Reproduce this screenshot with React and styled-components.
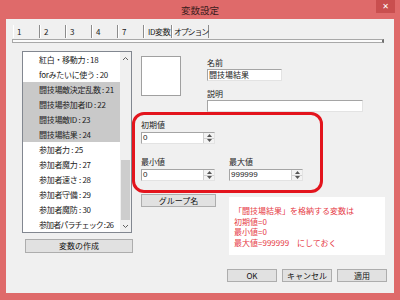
import React from "react";
import styled, { createGlobalStyle } from "styled-components";

const font = `"Noto Sans CJK JP", "Noto Sans", "Liberation Sans", sans-serif`;

const GlobalStyle = createGlobalStyle`
  html, body {
    margin: 0;
    padding: 0;
  }
  body {
    width: 400px;
    height: 300px;
    overflow: hidden;
    font-family: ${font};
    font-size: 8px;
    color: #1a1a1a;
  }
`;

const Frame = styled.div`
  width: 400px;
  height: 300px;
  box-sizing: border-box;
  padding: 0 6px 7px 6px;
  background: #df6a6a;
  display: flex;
  flex-direction: column;
`;

const TitleBar = styled.div`
  height: 19px;
  display: grid;
  grid-template-columns: 1fr auto 1fr;
  align-items: start;
`;

const Title = styled.div`
  grid-column: 2;
  font-size: 9.5px;
  line-height: 20px;
  color: #3b1c1c;
`;

const CloseButton = styled.div`
  grid-column: 3;
  justify-self: end;
  margin-right: -1px;
  width: 19px;
  height: 13px;
  background: #c94f4f;
  color: #fff;
  font: bold 8px/13px "DejaVu Sans", sans-serif;
  text-align: center;
`;

const Client = styled.div`
  flex: 1;
  background: #f0f0f0;
  display: flex;
  flex-direction: column;
`;

const TabStrip = styled.div`
  margin: 6px 10px 0 6px;
`;

const TabRow = styled.div`
  display: flex;
  height: 13px;
  padding-left: 1px;
`;

const Tab = styled.div`
  width: ${(p) => p.w}px;
  box-sizing: border-box;
  padding-left: ${(p) => (p.tight ? 1 : 3)}px;
  line-height: 13px;
  border-left: 1px solid #ffffff;
  border-right: 1px solid #8c8c8c;
  white-space: nowrap;
  letter-spacing: ${(p) => (p.tight ? -1.2 : -0.4)}px;
`;

const TabPanelEdge = styled.div`
  height: 4px;
  margin-top: 1px;
  box-sizing: border-box;
  border: 1px solid #a8a8a8;
  border-right: 2px solid #707070;
  background: #fbfbfb;
`;

const Body = styled.div`
  display: flex;
`;

const LeftCol = styled.div`
  width: 110px;
  margin-left: 16px;
  padding-top: 8px;
  display: flex;
  flex-direction: column;
`;

const ListBox = styled.div`
  height: 182px;
  box-sizing: border-box;
  border: 1px solid #828790;
  background: #fff;
  display: flex;
`;

const ListItems = styled.div`
  flex: 1;
  overflow: hidden;
`;

const ListRow = styled.div`
  height: 15px;
  line-height: 15px;
  padding-left: 16px;
  white-space: nowrap;
  color: #222;
  letter-spacing: ${(p) => (p.tight ? -0.9 : -0.3)}px;
  background: ${(p) => (p.selected ? "#c9c9c9" : "transparent")};
`;

const ScrollBar = styled.div`
  width: 11px;
  background: #f0f0f0;
  display: flex;
  flex-direction: column;
`;

const ScrollArrow = styled.div`
  height: 12px;
  display: flex;
  align-items: center;
  justify-content: center;
`;

const ScrollTrack = styled.div`
  flex: 1;
  display: flex;
  flex-direction: column;
  justify-content: flex-end;
`;

const ScrollThumb = styled.div`
  height: 60px;
  margin: 0 1px;
  background: #cdcdcd;
`;

const Button = styled.div`
  width: ${(p) => p.w}px;
  height: ${(p) => p.h || 13}px;
  box-sizing: border-box;
  border: 1px solid #adadad;
  background: #e1e1e1;
  text-align: center;
  line-height: ${(p) => (p.h || 13) - 2}px;
  color: #111;
  white-space: nowrap;
`;

const CreateButton = styled(Button)`
  margin-top: 6px;
  margin-left: 3px;
`;

const RightCol = styled.div`
  padding-top: 13px;
  display: flex;
  flex-direction: column;
`;

const TopRow = styled.div`
  display: flex;
  padding-left: 9px;
`;

const ImageBox = styled.div`
  width: 40px;
  height: 40px;
  box-sizing: border-box;
  border: 1px solid #a0a0a0;
  background: #fff;
`;

const Fields = styled.div`
  margin-left: 26px;
  display: flex;
  flex-direction: column;
`;

const Label = styled.div`
  height: ${(p) => p.h || 13}px;
  line-height: ${(p) => p.h || 13}px;
  margin-top: ${(p) => p.mt || 0}px;
  color: #222;
  white-space: nowrap;
`;

const TextBox = styled.div`
  width: ${(p) => p.w}px;
  height: 12px;
  box-sizing: border-box;
  border: 1px solid #a5a5a5;
  border-bottom-color: #e3e3e3;
  border-right-color: #e3e3e3;
  background: #fff;
  line-height: 10px;
  padding-left: 1px;
  white-space: nowrap;
  overflow: hidden;
`;

const RedGroup = styled.div`
  width: 191px;
  height: 81px;
  box-sizing: border-box;
  border: 3px solid #e3141d;
  border-radius: 12px;
  padding: 4px 0 0 6px;
`;

const SpinRow = styled.div`
  display: flex;
  gap: 14px;
  margin-top: ${(p) => p.mt || 0}px;
`;

const SpinField = styled.div`
  display: flex;
  flex-direction: column;
`;

const SpinBox = styled.div`
  width: 74px;
  height: 12px;
  margin-top: 2px;
  box-sizing: border-box;
  border: 1px solid #a5a5a5;
  border-bottom-color: #e3e3e3;
  border-right-color: #e3e3e3;
  background: #fff;
  display: flex;
`;

const SpinValue = styled.div`
  flex: 1;
  line-height: 10px;
  padding-left: 1px;
  font-family: "Liberation Sans", sans-serif;
  font-size: 8px;
`;

const SpinButtons = styled.div`
  width: 10px;
  display: flex;
  flex-direction: column;
  background: #f3f3f3;
  border-left: 1px solid #d0d0d0;
`;

const SpinHalf = styled.div`
  flex: 1;
  display: flex;
  align-items: center;
  justify-content: center;
  border-top: ${(p) => (p.bottom ? "1px solid #d0d0d0" : "none")};
`;

const BottomRow = styled.div`
  display: flex;
  align-items: flex-start;
  padding-left: 9px;
`;

const GroupButton = styled(Button)`
  margin-top: 1px;
`;

const NoteBox = styled.div`
  width: 156px;
  height: 58px;
  margin: 4px 0 0 13px;
  box-sizing: border-box;
  padding: 9px 0 0 5px;
  background: #fff;
  color: #e63b46;
  line-height: 10.5px;
  white-space: pre;
`;

const Footer = styled.div`
  margin-top: auto;
  display: flex;
  justify-content: flex-end;
  gap: 5px;
  padding: 0 7px 11px 0;
`;

const Arrow = ({ up, size = 7 }) => (
  <svg width={size} height={size - 2} viewBox="0 0 7 5">
    <path
      d={up ? "M1 4 L3.5 1.5 L6 4" : "M1 1 L3.5 3.5 L6 1"}
      fill="none"
      stroke="#606060"
      strokeWidth="1"
    />
  </svg>
);

const Tri = ({ up }) => (
  <svg width="5" height="3" viewBox="0 0 5 3">
    <path d={up ? "M0 3 L2.5 0 L5 3 Z" : "M0 0 L2.5 3 L5 0 Z"} fill="#555" />
  </svg>
);

const Spin = ({ label, value }) => (
  <SpinField>
    <Label h={11}>{label}</Label>
    <SpinBox>
      <SpinValue>{value}</SpinValue>
      <SpinButtons>
        <SpinHalf>
          <Tri up />
        </SpinHalf>
        <SpinHalf bottom>
          <Tri />
        </SpinHalf>
      </SpinButtons>
    </SpinBox>
  </SpinField>
);

const tabs = [
  ["1", 27],
  ["2", 26],
  ["3", 26],
  ["4", 26],
  ["7", 26],
  ["ID変数", 28],
  ["オプション", 37, true],
];

const items = [
  ["紅白・移動力 : 18"],
  ["forみたいに使う : 20"],
  ["闘技場敵決定乱数 : 21", true],
  ["闘技場参加者ID : 22", true],
  ["闘技場敵ID : 23", true],
  ["闘技場結果 : 24", true],
  ["参加者力 : 25"],
  ["参加者魔力 : 27"],
  ["参加者速さ : 28"],
  ["参加者守備 : 29"],
  ["参加者魔防 : 30"],
  ["参加者パラチェック : 26", false, true],
];

const note =
  "「闘技場結果」を格納する変数は\n初期値=0\n最小値=0\n最大値=999999　にしておく";

export default function App() {
  return (
    <>
      <GlobalStyle />
      <Frame>
        <TitleBar>
          <Title>変数設定</Title>
          <CloseButton>✕</CloseButton>
        </TitleBar>
        <Client>
          <TabStrip>
            <TabRow>
              {tabs.map(([t, w, tight]) => (
                <Tab key={t} w={w} tight={tight}>
                  {t}
                </Tab>
              ))}
            </TabRow>
            <TabPanelEdge />
          </TabStrip>
          <Body>
            <LeftCol>
              <ListBox>
                <ListItems>
                  {items.map(([t, sel, tight]) => (
                    <ListRow key={t} selected={sel} tight={tight}>
                      {t}
                    </ListRow>
                  ))}
                </ListItems>
                <ScrollBar>
                  <ScrollArrow>
                    <Arrow up />
                  </ScrollArrow>
                  <ScrollTrack>
                    <ScrollThumb />
                  </ScrollTrack>
                  <ScrollArrow>
                    <Arrow />
                  </ScrollArrow>
                </ScrollBar>
              </ListBox>
              <CreateButton w={108} h={14}>
                変数の作成
              </CreateButton>
            </LeftCol>
            <RightCol>
              <TopRow>
                <ImageBox />
                <Fields>
                  <Label>名前</Label>
                  <TextBox w={75}>闘技場結果</TextBox>
                  <Label mt={6}>説明</Label>
                  <TextBox w={156} />
                </Fields>
              </TopRow>
              <RedGroup>
                <Spin label="初期値" value="0" />
                <SpinRow mt={12}>
                  <Spin label="最小値" value="0" />
                  <Spin label="最大値" value="999999" />
                </SpinRow>
              </RedGroup>
              <BottomRow>
                <GroupButton w={75}>グループ名</GroupButton>
                <NoteBox>{note}</NoteBox>
              </BottomRow>
            </RightCol>
          </Body>
          <Footer>
            <Button w={50}>OK</Button>
            <Button w={50}>キャンセル</Button>
            <Button w={50}>適用</Button>
          </Footer>
        </Client>
      </Frame>
    </>
  );
}
